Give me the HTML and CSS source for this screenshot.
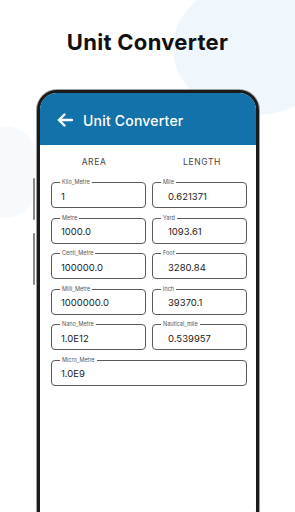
FILE: index.html
```html
<!DOCTYPE html>
<html lang="en">
<head>
  <meta charset="UTF-8" />
  <meta name="viewport" content="width=device-width, initial-scale=1.0"/>
  <title>Unit Converter</title>
  <link rel="stylesheet" href="styles.css">
</head>
<body>
  <h1 class="promo-title">Unit Converter</h1>
  <div class="phone">
    <span class="side-btn btn-1"></span>
    <span class="side-btn btn-2"></span>
    <div class="screen">
      <div class="app-bar">
        <svg class="back" width="16" height="14" viewBox="0 0 16 14">
          <path d="M15 7H2.5M7.5 1.5L1.8 7l5.7 5.5" fill="none" stroke="#fff" stroke-width="2.4" stroke-linecap="round" stroke-linejoin="round"/>
        </svg>
        <span class="app-title">Unit Converter</span>
      </div>
      <div class="tabs">
        <div class="tab">AREA</div>
        <div class="tab">LENGTH</div>
      </div>
      <div class="fields">
        <div class="field"><span class="label">Kilo_Metre</span><span class="value">1</span></div>
        <div class="field indent"><span class="label">Mile</span><span class="value">0.621371</span></div>
        <div class="field"><span class="label">Metre</span><span class="value">1000.0</span></div>
        <div class="field indent"><span class="label">Yard</span><span class="value">1093.61</span></div>
        <div class="field"><span class="label">Centi_Metre</span><span class="value">100000.0</span></div>
        <div class="field indent"><span class="label">Foot</span><span class="value">3280.84</span></div>
        <div class="field"><span class="label">Milli_Metre</span><span class="value">1000000.0</span></div>
        <div class="field indent"><span class="label">Inch</span><span class="value">39370.1</span></div>
        <div class="field"><span class="label">Nano_Metre</span><span class="value">1.0E12</span></div>
        <div class="field indent"><span class="label">Nautical_mile</span><span class="value">0.539957</span></div>
        <div class="field wide"><span class="label">Micro_Metre</span><span class="value">1.0E9</span></div>
      </div>
    </div>
  </div>
</body>
</html>
```

FILE: styles.css
```css
* { box-sizing: border-box; }
html, body {
  margin: 0;
  padding: 0;
  width: 295px;
  height: 512px;
  overflow: hidden;
}
body {
  font-family: 'Inter', 'Noto Sans', sans-serif;
  background-color: #fff;
  background-image:
    radial-gradient(ellipse 82px 68px at 254px 48px, #f0f7fc 98%, rgba(240,247,252,0) 100%),
    radial-gradient(ellipse 36px 46px at 6px 172px, #f6fafd 98%, rgba(246,250,253,0) 100%);
  background-repeat: no-repeat;
}
.promo-title {
  margin: 0;
  padding-top: 28px;
  height: 90px;
  text-align: center;
  font-size: 22px;
  font-weight: 700;
  color: #111;
  line-height: 28px;
  letter-spacing: 0.3px;
}
.phone {
  position: relative;
  margin-left: 37px;
  width: 222px;
  height: 440px;
  border: 3px solid #1b1b1b;
  border-radius: 20px;
  box-shadow: 0 0 0 1px #a0a0a0;
  background: #fff;
}
.side-btn {
  position: absolute;
  left: -7px;
  width: 2px;
  background: #8a8a8a;
  border-radius: 1px;
}
.btn-1 { top: 85px; height: 42px; }
.btn-2 { top: 140px; height: 52px; }
.screen {
  border-radius: 17px 17px 0 0;
  overflow: hidden;
  height: 100%;
}
.app-bar {
  height: 52px;
  background: #1472aa;
  display: flex;
  align-items: center;
  padding: 2px 0 0 17px;
}
.back { display: block; }
.app-title {
  margin-left: 10px;
  color: #fff;
  font-size: 14px;
  font-weight: 500;
  letter-spacing: 0.2px;
}
.tabs {
  display: flex;
  height: 34px;
  align-items: center;
  padding-bottom: 1px;
}
.tab {
  flex: 1;
  text-align: center;
  font-size: 8.5px;
  letter-spacing: 0.6px;
  color: #444;
}
.fields {
  display: grid;
  grid-template-columns: 1fr 1fr;
  column-gap: 6px;
  row-gap: 9.5px;
  padding: 3px 9px 0 11px;
}
.field {
  position: relative;
  height: 26px;
  border: 1px solid #5a5a5a;
  border-radius: 4px;
  display: flex;
  align-items: center;
  padding: 2px 0 0 9px;
}
.field.indent { padding-left: 15px; }
.field.wide { grid-column: span 2; }
.label {
  position: absolute;
  top: -4px;
  left: 8px;
  padding: 0 2px;
  background: #fff;
  font-size: 5.5px;
  line-height: 7px;
  color: #555;
}
.value {
  font-size: 9.5px;
  color: #222;
}
```
